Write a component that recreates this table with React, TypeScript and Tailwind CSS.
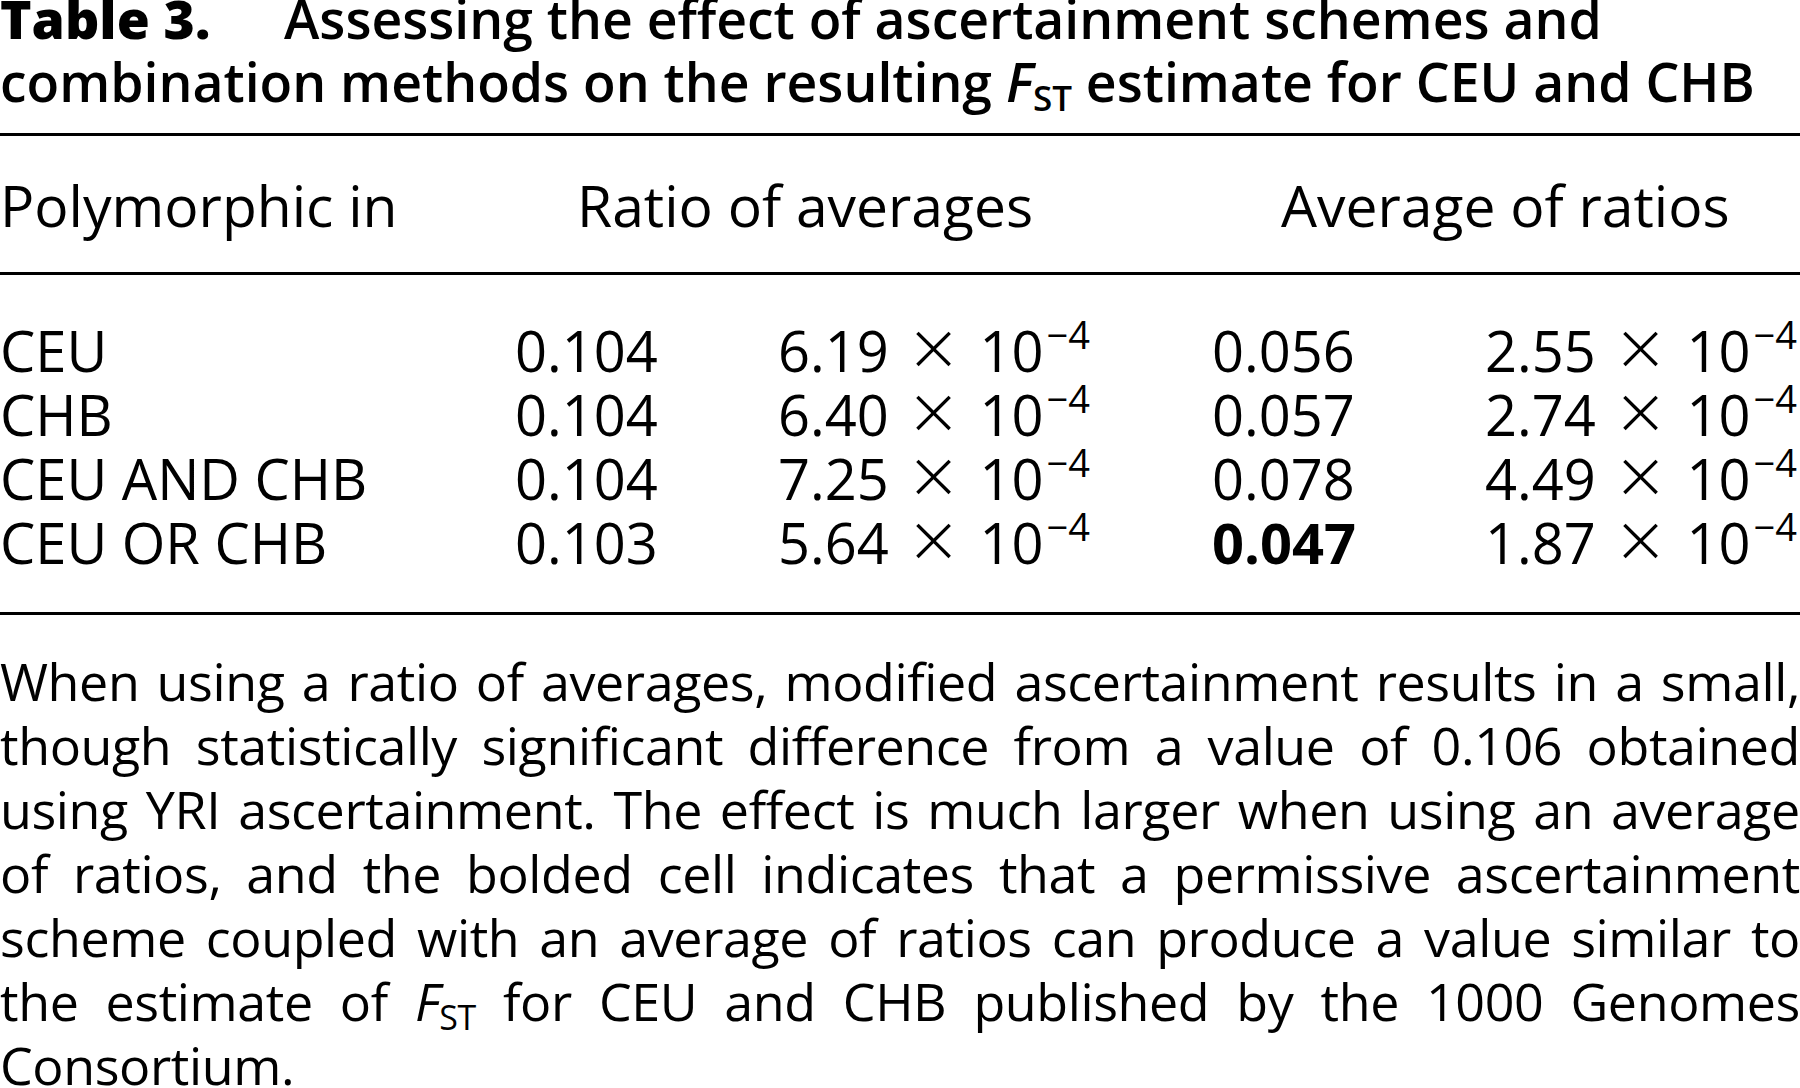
const rows = [
  { label: 'CEU', roa: '0.104', roaSe: '6.19', aor: '0.056', aorSe: '2.55', bold: false },
  { label: 'CHB', roa: '0.104', roaSe: '6.40', aor: '0.057', aorSe: '2.74', bold: false },
  { label: 'CEU AND CHB', roa: '0.104', roaSe: '7.25', aor: '0.078', aorSe: '4.49', bold: false },
  { label: 'CEU OR CHB', roa: '0.103', roaSe: '5.64', aor: '0.047', aorSe: '1.87', bold: true },
];

// each line of the footnote, justified to the full width
const noteLines = [
  'When using a ratio of averages, modified ascertainment results in a small,',
  'though statistically significant difference from a value of 0.106 obtained',
  'using YRI ascertainment. The effect is much larger when using an average',
  'of ratios, and the bolded cell indicates that a permissive ascertainment',
  'scheme coupled with an average of ratios can produce a value similar to',
  'the estimate of F_ST for CEU and CHB published by the 1000 Genomes',
];

function Fst({ sub }: { sub: string }) {
  return (
    <span className="whitespace-nowrap">
      <span className="italic">F</span>
      <span className={sub}>ST</span>
    </span>
  );
}

function Sci({ value }: { value: string }) {
  return (
    <span className="whitespace-nowrap">
      {value}
      <span className="ml-[22px] mr-[23px] align-[-5px] text-[80px] font-light leading-[0]">×</span>
      10
      <span className="ml-[3px] align-[23px] text-[38px] leading-[0]">−4</span>
    </span>
  );
}

export default function App() {
  return (
    <div className="w-full h-[1088px] overflow-hidden bg-white text-black font-['Open_Sans',sans-serif]">
      {/* Caption */}
      <div className="-mt-[13px] text-[53.5px] leading-[63px] font-semibold whitespace-nowrap">
        <div>
          <span className="inline-block w-[284px] font-extrabold">Table 3.</span>
          Assessing the effect of ascertainment schemes and
        </div>
        <div>
          combination methods on the resulting <Fst sub="text-[35px] align-[-9px] leading-[0]" /> estimate for CEU
          and CHB
        </div>
      </div>

      {/* Table */}
      <div className="mt-[20px] border-t-[3px] border-black" />
      <div className="flex pt-[37px] pb-[35px] text-[57px] leading-[64px] whitespace-nowrap">
        <div className="w-[577px]">Polymorphic in</div>
        <div className="w-[704px]">Ratio of averages</div>
        <div>Average of ratios</div>
      </div>
      <div className="border-t-[3px] border-black" />
      <div className="pt-[43px] pb-[38px] text-[56px] leading-[64px] whitespace-nowrap">
        {rows.map((r) => (
          <div key={r.label} className="grid grid-cols-[515px_263px_434px_273px_1fr]">
            <div>{r.label}</div>
            <div>{r.roa}</div>
            <div>
              <Sci value={r.roaSe} />
            </div>
            <div className={r.bold ? 'font-bold' : ''}>{r.aor}</div>
            <div>
              <Sci value={r.aorSe} />
            </div>
          </div>
        ))}
      </div>
      <div className="border-t-[3px] border-black" />

      {/* Footnote */}
      <div className="mt-[34px] text-[52px] leading-[64px] tracking-[-0.4px]">
        {noteLines.map((line) => (
          <div key={line} className="flex justify-between whitespace-nowrap">
            {line.split(' ').map((w, i) =>
              w === 'F_ST' ? (
                <Fst key={i} sub="text-[34px] align-[-9px] leading-[0]" />
              ) : (
                <span key={i}>{w}</span>
              ),
            )}
          </div>
        ))}
        <div>Consortium.</div>
      </div>
    </div>
  );
}
